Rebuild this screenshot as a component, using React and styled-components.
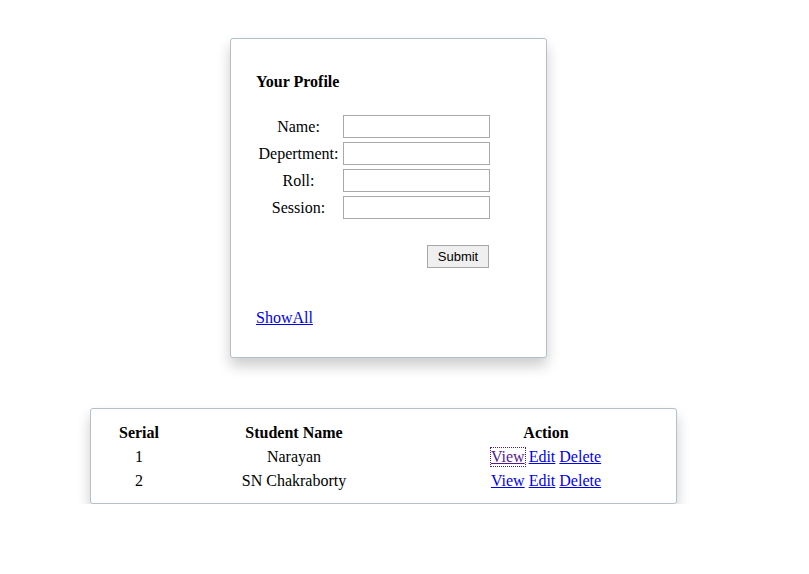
import React from 'react'
import styled, { createGlobalStyle } from 'styled-components'

const GlobalStyle = createGlobalStyle`
  body {
    margin: 0;
    background: #fff;
    font-family: "Liberation Serif", "Times New Roman", serif;
    font-size: 16px;
    color: #000;
  }
`

const Page = styled.div`
  display: flex;
  flex-direction: column;
  align-items: flex-start;
  padding-top: 38px;
`

const Card = styled.div`
  box-sizing: border-box;
  width: ${props => props.width}px;
  margin-left: ${props => props.left}px;
  margin-bottom: ${props => props.gap || 0}px;
  border: 1px solid #b3bfcb;
  border-radius: 3px;
  background: #fff;
  box-shadow: 0 8px 14px rgba(0, 0, 0, 0.2);
`

const ProfileBody = styled.div`
  padding: 34px 25px 30px;
`

const Title = styled.h4`
  margin: 0 0 24px;
  font-size: 16px;
  line-height: 18px;
  font-weight: bold;
`

const Form = styled.form`
  display: grid;
  grid-template-columns: 85px 147px;
  column-gap: 2px;
  row-gap: 4px;
  width: 234px;
`

const Label = styled.label`
  text-align: center;
  line-height: 23px;
`

const Input = styled.input`
  box-sizing: border-box;
  width: 147px;
  height: 23px;
  border: 1px solid #a9a9a9;
  margin: 0;
  padding: 1px 2px;
  font-family: "Liberation Sans", Arial, sans-serif;
`

const ButtonRow = styled.div`
  grid-column: 1 / 3;
  display: flex;
  justify-content: flex-end;
  padding-right: 1px;
  margin-top: 22px;
`

const Button = styled.button`
  box-sizing: border-box;
  width: 62px;
  height: 23px;
  padding: 0;
  border: 1px solid #a7a7a7;
  border-radius: 0;
  background: #efefef;
  font-family: "Liberation Sans", Arial, sans-serif;
  font-size: 13px;
  color: #000;
`

const Link = styled.a`
  color: ${props => (props.visited ? '#551a8b' : '#0000ee')};
  text-decoration: underline;
  outline: ${props => (props.focused ? '1px dotted #551a8b' : 'none')};
`

const ShowAllLine = styled.div`
  margin-top: 41px;
  line-height: 18px;
`

const TableBody = styled.div`
  padding: 12px 0 10px 19px;
`

const Grid = styled.div`
  display: grid;
  grid-template-columns: 58px 252px 252px;
  grid-auto-rows: 24px;
  align-items: center;
`

const Cell = styled.div`
  text-align: center;
  font-weight: ${props => (props.head ? 'bold' : 'normal')};
  line-height: 18px;
`

const Actions = styled.div`
  display: flex;
  justify-content: center;
  gap: 4px;
  line-height: 18px;
`

const students = [
  { serial: 1, name: 'Narayan' },
  { serial: 2, name: 'SN Chakraborty' }
]

const fields = ['Name:', 'Depertment:', 'Roll:', 'Session:']

export default function App() {
  return (
    <Page>
      <GlobalStyle />
      <Card width={317} left={230} gap={50}>
        <ProfileBody>
          <Title>Your Profile</Title>
          <Form onSubmit={e => e.preventDefault()}>
            {fields.map(f => (
              <React.Fragment key={f}>
                <Label>{f}</Label>
                <Input type="text" />
              </React.Fragment>
            ))}
            <ButtonRow>
              <Button type="submit">Submit</Button>
            </ButtonRow>
          </Form>
          <ShowAllLine>
            <Link href="#">ShowAll</Link>
          </ShowAllLine>
        </ProfileBody>
      </Card>
      <Card width={587} left={90}>
        <TableBody>
          <Grid>
            <Cell head>Serial</Cell>
            <Cell head>Student Name</Cell>
            <Cell head>Action</Cell>
            {students.map((s, i) => (
              <React.Fragment key={s.serial}>
                <Cell>{s.serial}</Cell>
                <Cell>{s.name}</Cell>
                <Actions>
                  <Link href="#" visited={i === 0} focused={i === 0}>View</Link>
                  <Link href="#">Edit</Link>
                  <Link href="#">Delete</Link>
                </Actions>
              </React.Fragment>
            ))}
          </Grid>
        </TableBody>
      </Card>
    </Page>
  )
}
